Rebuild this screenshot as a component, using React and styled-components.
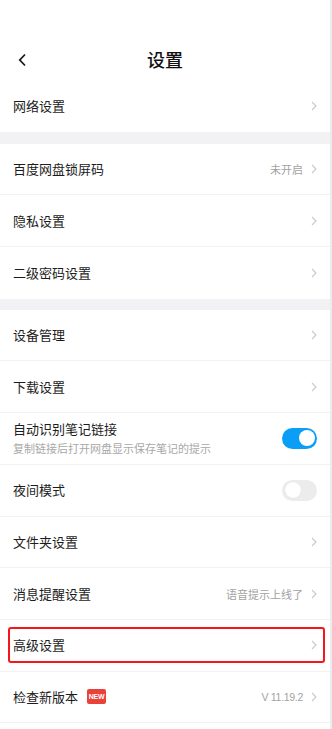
import React from "react";
import styled, { createGlobalStyle } from "styled-components";

// ==============================
// =====  Styled Component  =====
// ==============================

const GlobalStyle = createGlobalStyle`
  html, body {
    margin: 0;
    padding: 0;
    background: #ffffff;
  }
  body {
    font-family: "Noto Sans CJK SC", "Noto Sans", "Liberation Sans", sans-serif;
    -webkit-font-smoothing: antialiased;
  }
`;

const Page = styled.div`
  width: 332px;
  min-height: 729px;
  box-sizing: border-box;
  border-right: 2px solid #ececee;
  background: #ffffff;
  overflow: hidden;
`;

const Header = styled.header`
  height: 80px;
  padding-top: 38px;
  box-sizing: border-box;
  position: relative;
  display: flex;
  align-items: center;
  justify-content: center;
`;

const Back = styled.button`
  position: absolute;
  left: 13px;
  top: 50px;
  width: 18px;
  height: 20px;
  padding: 0;
  border: none;
  background: none;
  display: flex;
  align-items: center;
  justify-content: center;
`;

const Title = styled.h1`
  margin: 0;
  font-size: 18px;
  font-weight: 500;
  color: #111;
  line-height: 1;
`;

const Group = styled.section`
  background: #fff;
`;

const Gap = styled.div`
  height: ${props => props.h || 12}px;
  background: #f2f2f4;
`;

const Row = styled.div`
  position: relative;
  height: 51.7px;
  box-sizing: border-box;
  padding: 0 13px;
  display: flex;
  align-items: center;
  border-bottom: ${props => (props.last ? "none" : "1px solid #f2f2f2")};
`;

const Labels = styled.div`
  flex: 1;
  display: flex;
  flex-direction: column;
  justify-content: center;
  min-width: 0;
`;

const LabelLine = styled.div`
  display: flex;
  align-items: center;
`;

const Label = styled.span`
  font-size: 13px;
  color: #1c1c1c;
  line-height: 18px;
`;

const Sub = styled.span`
  font-size: 11px;
  color: #a8a8a8;
  line-height: 15px;
  margin-top: 3px;
`;

const Value = styled.span`
  font-size: ${props => (props.latin ? "10.5px" : "11px")};
  letter-spacing: ${props => (props.latin ? "-0.3px" : "0")};
  color: #a2a2a2;
  margin-right: 8px;
  font-family: ${props =>
    props.latin
      ? '"Liberation Sans", "Noto Sans CJK SC", sans-serif'
      : '"Noto Sans CJK SC", sans-serif'};
`;

const Badge = styled.span`
  margin-left: 9px;
  width: 19px;
  height: 15px;
  border-radius: 2px;
  background: #e8423b;
  color: #fff;
  font-family: "Liberation Sans", Arial, sans-serif;
  font-size: 7px;
  font-weight: 700;
  display: flex;
  align-items: center;
  justify-content: center;
  letter-spacing: -0.2px;
`;

const Toggle = styled.div`
  width: 35px;
  height: 21px;
  border-radius: 11px;
  background: ${props => (props.on ? "#0b9ef7" : "#ececec")};
  position: relative;
  flex-shrink: 0;

  &::after {
    content: "";
    position: absolute;
    top: 2.5px;
    left: ${props => (props.on ? "16.5px" : "2.5px")};
    width: 16px;
    height: 16px;
    border-radius: 50%;
    background: #fff;
    box-shadow: ${props => (props.on ? "none" : "0 0 1px rgba(0,0,0,0.12)")};
  }
`;

const Highlight = styled.div`
  position: absolute;
  left: 8px;
  right: 5px;
  top: 7px;
  bottom: 8px;
  border: 2px solid #f4161a;
  border-radius: 3px;
  pointer-events: none;
`;

// ==============================
// =====      Component     =====
// ==============================

const Chevron = () => (
  <svg width="6" height="10" viewBox="0 0 6 10">
    <path d="M1 1 L5 5 L1 9" fill="none" stroke="#c9c9c9" strokeWidth="1.1" />
  </svg>
);

function Item({ label, sub, value, latin, badge, toggle, last, highlight }) {
  return (
    <Row last={last}>
      <Labels>
        <LabelLine>
          <Label>{label}</Label>
          {badge && <Badge>{badge}</Badge>}
        </LabelLine>
        {sub && <Sub>{sub}</Sub>}
      </Labels>
      {value && <Value latin={latin}>{value}</Value>}
      {toggle !== undefined ? <Toggle on={toggle} /> : <Chevron />}
      {highlight && <Highlight />}
    </Row>
  );
}

export default function App() {
  return (
    <>
      <GlobalStyle />
      <Page>
        <Header>
          <Back aria-label="back">
            <svg width="9" height="14" viewBox="0 0 9 14">
              <path
                d="M7 1.5 L1.8 7 L7 12.5"
                fill="none"
                stroke="#1a1a1a"
                strokeWidth="1.8"
              />
            </svg>
          </Back>
          <Title>设置</Title>
        </Header>

        <Group>
          <Item label="网络设置" last />
        </Group>
        <Gap h={12} />
        <Group>
          <Item label="百度网盘锁屏码" value="未开启" />
          <Item label="隐私设置" />
          <Item label="二级密码设置" last />
        </Group>
        <Gap h={11} />
        <Group>
          <Item label="设备管理" />
          <Item label="下载设置" />
          <Item
            label="自动识别笔记链接"
            sub="复制链接后打开网盘显示保存笔记的提示"
            toggle={true}
          />
          <Item label="夜间模式" toggle={false} />
          <Item label="文件夹设置" />
          <Item label="消息提醒设置" value="语音提示上线了" />
          <Item label="高级设置" highlight />
          <Item label="检查新版本" badge="NEW" value="V 11.19.2" latin />
        </Group>
      </Page>
    </>
  );
}
